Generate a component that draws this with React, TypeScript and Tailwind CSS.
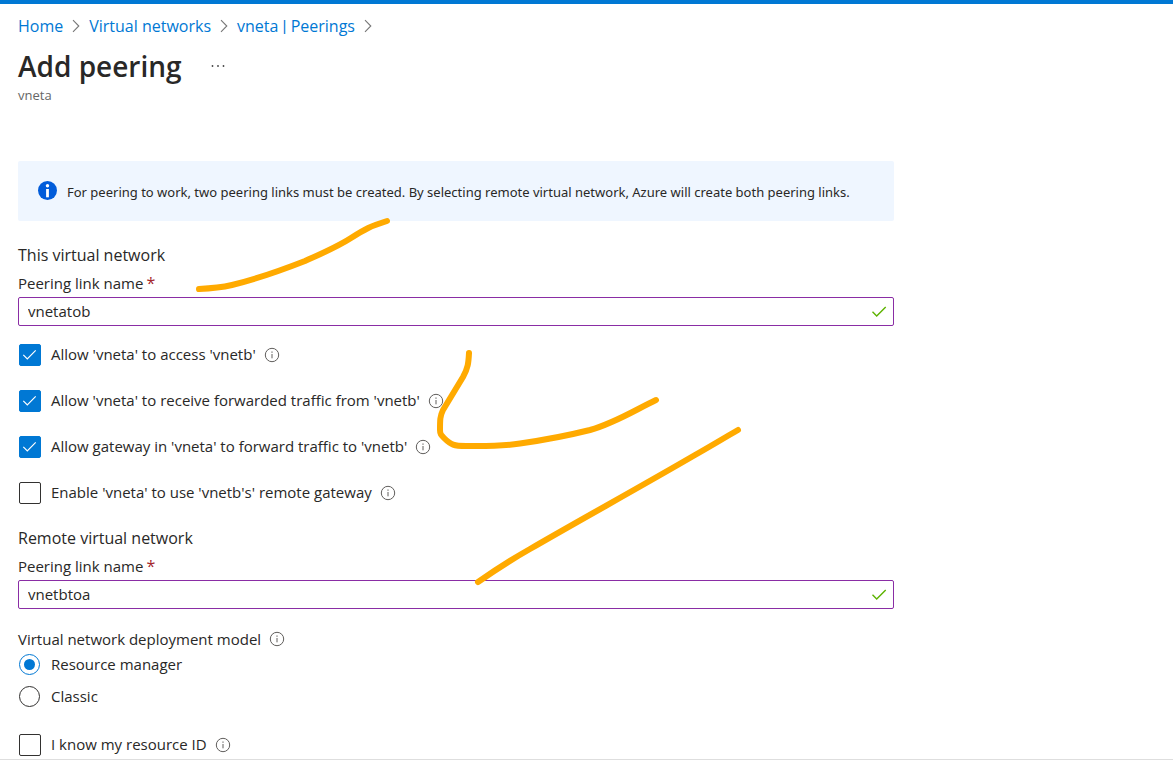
import { useId, useState } from "react";
import type { ReactNode } from "react";

function InfoIcon() {
  return (
    <svg viewBox="0 0 16 16" className="size-4 shrink-0" fill="none" aria-hidden="true">
      <circle cx="8" cy="8" r="6.7" stroke="#605e5c" strokeWidth="1" />
      <path d="M8 7v4.3" stroke="#605e5c" strokeWidth="1" />
      <path d="M8 4.6v1.2" stroke="#605e5c" strokeWidth="1.1" />
    </svg>
  );
}

function InfoButton({ label }: { label: string }) {
  return (
    <button type="button" aria-label={label} className="flex shrink-0 pb-px">
      <InfoIcon />
    </button>
  );
}

function Crumb({ children }: { children: ReactNode }) {
  return (
    <li className="flex items-center gap-[9px]">
      <a href="#" className="text-[#0078d4]">
        {children}
      </a>
      <svg viewBox="0 0 8 14" className="h-[14px] w-2" fill="none" aria-hidden="true">
        <path d="M1 1.2 6.8 7 1 12.8" stroke="#777" strokeWidth="1.1" />
      </svg>
    </li>
  );
}

function LinkNameField({ heading, initial }: { heading: string; initial: string }) {
  const id = useId();
  const [value, setValue] = useState(initial);
  return (
    <div>
      <h2 className="text-[16px] leading-6">{heading}</h2>
      <label htmlFor={id} className="mt-1 flex gap-[3px] leading-6">
        Peering link name
        <span className="text-[16px] text-[#a4262c]">*</span>
      </label>
      <div className="mt-[2px] flex h-[29px] items-center rounded-[2px] border border-[#8a2da5] pr-[6px]">
        <input
          id={id}
          type="text"
          value={value}
          onChange={(e) => setValue(e.target.value)}
          className="min-w-0 flex-1 bg-transparent pb-[2px] pl-[9px] leading-6 outline-none"
        />
        <svg viewBox="0 0 16 16" className="size-4" fill="none" aria-hidden="true">
          <path d="m1.5 7.7 4.2 4.2 9-9" stroke="#5db300" strokeWidth="1.4" />
        </svg>
      </div>
    </div>
  );
}

function CheckRow({ label, initial = false }: { label: string; initial?: boolean }) {
  const id = useId();
  const [checked, setChecked] = useState(initial);
  return (
    <div className="flex h-[22px] items-center">
      <span className="ml-px grid size-[22px] shrink-0">
        <input
          id={id}
          type="checkbox"
          checked={checked}
          onChange={(e) => setChecked(e.target.checked)}
          className="col-start-1 row-start-1 size-[22px] appearance-none rounded-[2px] border border-[#323130] checked:border-[#0078d4] checked:bg-[#0078d4]"
        />
        {checked && (
          <svg
            viewBox="0 0 22 22"
            className="pointer-events-none col-start-1 row-start-1 size-[22px]"
            fill="none"
            aria-hidden="true"
          >
            <path d="m4.3 10.8 4 4 8.4-8.4" stroke="#fff" strokeWidth="1.2" />
          </svg>
        )}
      </span>
      <label htmlFor={id} className="mr-2 pb-[2px] pl-[10px] leading-[22px]">
        {label}
      </label>
      <InfoButton label={`About: ${label}`} />
    </div>
  );
}

function RadioRow({
  label,
  checked,
  onSelect,
}: {
  label: string;
  checked: boolean;
  onSelect: () => void;
}) {
  const id = useId();
  return (
    <div className="flex h-[22px] items-center">
      <span className="ml-px grid size-[21px] shrink-0 place-items-center">
        <input
          id={id}
          type="radio"
          name="deployment-model"
          checked={checked}
          onChange={onSelect}
          className="col-start-1 row-start-1 size-[21px] appearance-none rounded-full border border-[#323130] checked:border-[#0078d4]"
        />
        {checked && (
          <span className="pointer-events-none col-start-1 row-start-1 size-[11px] rounded-full bg-[#0078d4]" />
        )}
      </span>
      <label htmlFor={id} className="pl-[11px] leading-[22px]">
        {label}
      </label>
    </div>
  );
}

function PenStrokes() {
  return (
    <svg
      viewBox="0 0 1173 766"
      className="pointer-events-none absolute top-0 left-0 h-[766px] w-[1173px] max-w-none"
      fill="none"
      stroke="#ffaa00"
      strokeWidth="6"
      strokeLinecap="round"
      strokeLinejoin="round"
      aria-hidden="true"
    >
      <path d="M199 289C210 288.500 219 288 232 285C255 279.500 282 270 305 261C323 253 337 247 351 238C366 228.500 370 226.500 387 221" />
      <path d="M469 353C468.500 363 468 368 463 377L443 410C440 416 440 420 440 430C440 434 441 435 444 438C451 445 454 446 466 446C495 446.500 510 445 520 443.500C548 439.500 570 435 590 430C615 423 635 410 656 400" />
      <path d="M478 582C491 573 507 562 530 549C580 520 640 487 695 455C711 446 724 438 738 430" />
    </svg>
  );
}

export default function App() {
  const [model, setModel] = useState("Resource manager");
  return (
    <div className="relative min-h-screen overflow-x-hidden bg-white font-['Open_Sans','Noto_Sans',sans-serif] text-[15px] text-[#292827]">
      <div className="h-1 bg-[#0078d4]" />
      <main className="px-[18px] pt-[10px]">
        <nav aria-label="Breadcrumb">
          <ol className="flex flex-wrap gap-x-[9px] text-[16px] leading-6">
            <Crumb>Home</Crumb>
            <Crumb>Virtual networks</Crumb>
            <Crumb>
              vneta <span className="font-[Roboto,sans-serif] leading-none">|</span> Peerings
            </Crumb>
          </ol>
        </nav>
        <div className="mt-[10px] flex items-center gap-7">
          <h1 className="text-[28px] leading-9 font-semibold">Add peering</h1>
          <button type="button" aria-label="More options" className="flex h-6 items-center">
            <svg viewBox="0 0 16 4" className="h-1 w-4" fill="#444" aria-hidden="true">
              <circle cx="2.500" cy="2" r="0.900" />
              <circle cx="8" cy="2" r="0.900" />
              <circle cx="13.500" cy="2" r="0.900" />
            </svg>
          </button>
        </div>
        <p className="text-[13px] leading-[22px] text-[#666]">vneta</p>

        <div className="max-w-[876px]">
          <div
            role="note"
            className="mt-[55px] flex min-h-[60px] items-center gap-[9px] rounded-[2px] bg-[#eff6ff] px-5"
          >
            <svg viewBox="0 0 20 20" className="size-5 shrink-0" aria-hidden="true">
              <circle cx="9.500" cy="9.500" r="9.500" fill="#015cda" />
              <circle cx="9.500" cy="4.700" r="1.700" fill="#fff" />
              <path d="M8.100 8h2.800v8.300H8.100z" fill="#fff" />
            </svg>
            <p className="pt-px font-['Noto_Sans',sans-serif] text-[13px] leading-5">
              For peering to work, two peering links must be created. By selecting remote virtual
              network, Azure will create both peering links.
            </p>
          </div>

          <form className="mt-[22px]" onSubmit={(e) => e.preventDefault()}>
            <LinkNameField heading="This virtual network" initial="vnetatob" />
            <div className="mt-[18px] mb-[22px] flex flex-col gap-6">
              <CheckRow label="Allow 'vneta' to access 'vnetb'" initial />
              <CheckRow label="Allow 'vneta' to receive forwarded traffic from 'vnetb'" initial />
              <CheckRow label="Allow gateway in 'vneta' to forward traffic to 'vnetb'" initial />
              <CheckRow label="Enable 'vneta' to use 'vnetb's' remote gateway" />
            </div>
            <LinkNameField heading="Remote virtual network" initial="vnetbtoa" />
            <fieldset className="mt-[18px]">
              <legend className="flex items-center gap-2 leading-6">
                Virtual network deployment model
                <InfoButton label="About deployment models" />
              </legend>
              <div className="mt-[2px] flex flex-col gap-[10px]">
                {["Resource manager", "Classic"].map((name) => (
                  <RadioRow
                    key={name}
                    label={name}
                    checked={model === name}
                    onSelect={() => setModel(name)}
                  />
                ))}
              </div>
            </fieldset>
            <div className="mt-[27px]">
              <CheckRow label="I know my resource ID" />
            </div>
          </form>
        </div>
      </main>
      <hr className="mt-[3px] border-[#dedede]" />
      <PenStrokes />
    </div>
  );
}
